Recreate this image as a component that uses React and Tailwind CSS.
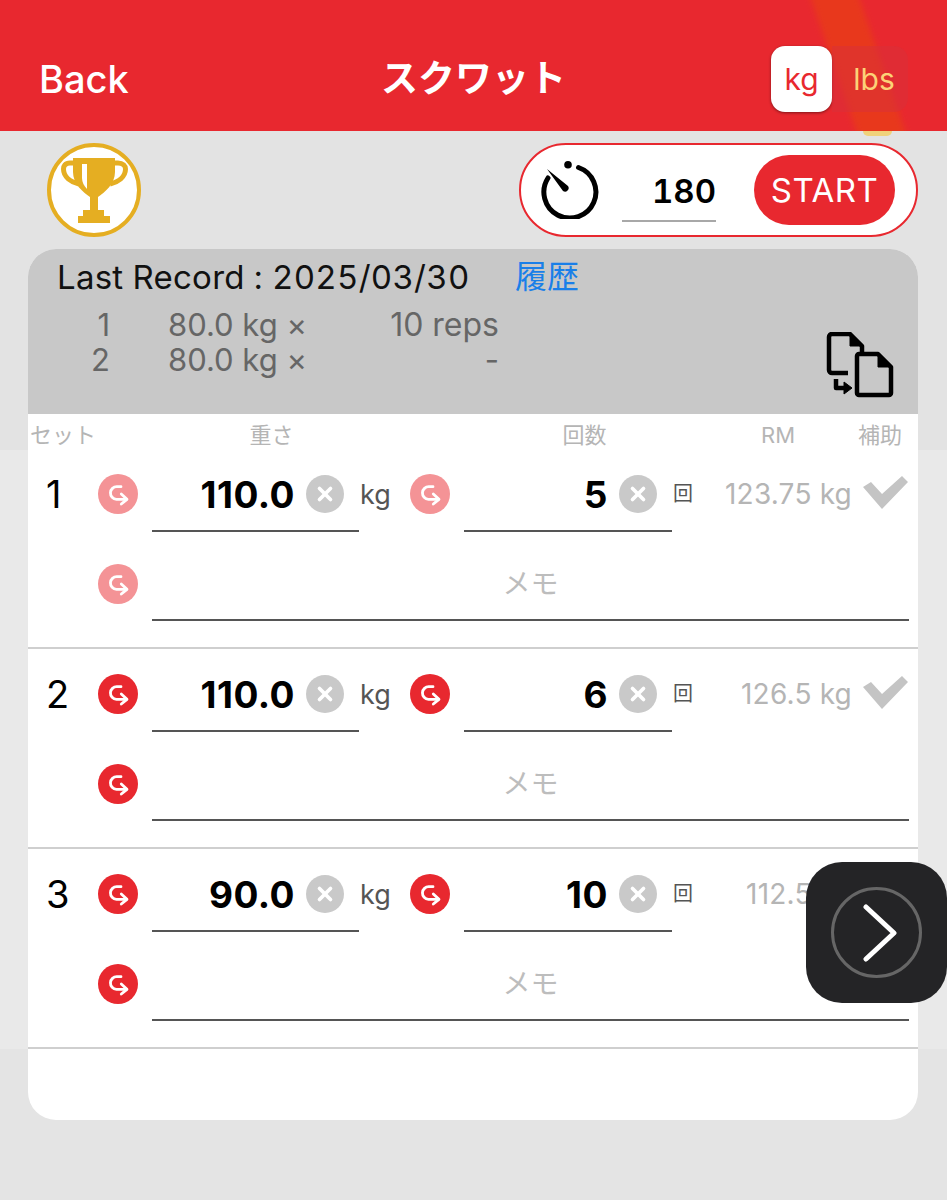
import { X } from 'lucide-react';

function ArrowBadge({ faded }) {
  return (
    <div className={`w-10 h-10 rounded-full flex items-center justify-center shrink-0 ${faded ? 'bg-[#f49396]' : 'bg-[#e8282f]'}`}>
      <svg width="24" height="24" viewBox="0 0 24 24" fill="none" stroke="white" strokeWidth="2.8" strokeLinecap="round" strokeLinejoin="round">
        <path d="M15 4.700h-4a5 5 0 0 0-.5 12.600H20" />
        <path d="M15.300 12l5.700 5.300-5.700 4.700" />
      </svg>
    </div>
  );
}

function ClearButton() {
  return (
    <div className="w-[38px] h-[38px] rounded-full bg-[#c9c9c9] flex items-center justify-center shrink-0">
      <X size={22} color="white" strokeWidth={4} />
    </div>
  );
}

function SetRow({ num, weight, reps, rm, faded }) {
  return (
    <div className="h-[200px] border-b-2 border-[#cfcfcf] pt-[25px] flex flex-col">
      <div className="flex items-center h-[40px]">
        <div className="w-[70px] pl-[18px] text-[38px] text-black leading-none">{num}</div>
        <ArrowBadge faded={faded} />
        <div className="w-[14px]" />
        <div className="relative w-[207px] flex items-center justify-end pr-[15px]">
          <span className="font-bold text-[37px] text-black leading-none pr-[11px] tracking-[0.5px]">{weight}</span>
          <ClearButton />
          <div className="absolute left-0 right-0 top-[55px] h-[2px] bg-[#555555]" />
        </div>
        <div className="w-[51px] text-[27px] text-[#555555] leading-none pl-[1px]">kg</div>
        <ArrowBadge faded={faded} />
        <div className="w-[14px]" />
        <div className="relative w-[208px] flex items-center justify-end pr-[15px]">
          <span className="font-bold text-[37px] text-black leading-none pr-[11px] tracking-[0.5px]">{reps}</span>
          <ClearButton />
          <div className="absolute left-0 right-0 top-[55px] h-[2px] bg-[#555555]" />
        </div>
        <div className="text-[20px] text-[#555555] leading-none w-[20px] ml-[1px]">回</div>
        <div className="w-[159px] text-right text-[28px] text-[#b5b5b5] leading-none whitespace-nowrap tracking-[0.2px]">{rm}</div>
        <svg width="47" height="34" viewBox="0 0 47 34" fill="#c4c4c4" className="ml-[10px] shrink-0 -translate-y-[1px]">
          <path d="M1 11L9 6L20 18L40 0L46 6L20 33Z" />
        </svg>
      </div>
      <div className="flex items-center h-[40px] mt-[50px] pl-[70px]">
        <ArrowBadge faded={faded} />
        <div className="w-[14px]" />
        <div className="relative w-[757px] text-center text-[28px] text-[#bdbdbd] leading-none">
          メモ
          <div className="absolute left-0 right-0 top-[49px] h-[2px] bg-[#555555]" />
        </div>
      </div>
    </div>
  );
}

export default function App() {
  return (
    <div
      className="relative w-[947px] h-[1200px] overflow-hidden bg-[linear-gradient(#e3e3e3_0,#e3e3e3_450px,#e9e9e9_450px,#e9e9e9_1049px,#e4e4e4_1049px)]"
      style={{ fontFamily: 'Inter, "Noto Sans CJK JP", sans-serif' }}
    >
      {/* Header */}
      <div className="relative h-[131px] bg-[#e8282f] overflow-hidden">
        <div className="absolute left-[835px] top-[-40px] w-[46px] h-[210px] bg-[#e8381c] blur-[3px] -rotate-[19deg]" />
        <div className="relative h-full flex items-center pl-[39px] pr-[39px] pt-[27px]">
          <div className="text-white text-[38px] font-medium leading-none w-[343px]">Back</div>
          <div className="text-white text-[37px] font-semibold leading-none w-[389px] -mt-[2px] -ml-[1px] pr-[0px]">スクワット</div>
          <div className="w-[61px] h-[66px] ml-[1px] rounded-[14px] bg-white shadow-[0_1px_3px_rgba(0,0,0,0.45)] flex items-center justify-center text-[#e8282f] text-[30px] leading-none">kg</div>
          <div className="w-[76px] h-[66px] pl-[8px] rounded-r-[14px] bg-[#d8303a]/50 flex items-center justify-center text-[#fcd277] text-[30px] leading-none">lbs</div>
        </div>
      </div>

      {/* Trophy and timer */}
      <div className="flex items-center h-[118px] pl-[47px] pr-[29px] justify-between">
        <div className="w-[94px] h-[94px] rounded-full bg-white border-[4px] border-[#e5ae22] flex items-center justify-center">
          <svg width="67" height="65" viewBox="0 0 67 65" className="mt-[1px]">
            <path fill="#e5ae22" d="M12 0H54V14C54 26 44 34 37 39V52H43V58H49V65H17V58H22V52H29V39C22 34 12 26 12 14Z" />
            <path fill="none" stroke="#e5ae22" strokeWidth="5" d="M14 5H9C4 5 2.500 8 2.500 11C2.500 19 10 24 18 26" />
            <path fill="none" stroke="#e5ae22" strokeWidth="5" d="M52 5H57C62 5 64.500 8 64.500 11C64.500 19 57 24 49 26" />
            <path fill="white" d="M21 6H26V31C23 28 21 24 21 20Z" />
          </svg>
        </div>
        <div className="w-[399px] h-[94px] rounded-full bg-white border-[2px] border-[#e8282f] flex items-center pl-[18px] pr-[21px]">
          <svg width="60" height="58" viewBox="0 0 60 58" fill="none" className="shrink-0">
            <path d="M39.500 6.500A26 26 0 1 1 9 17" stroke="black" strokeWidth="5" strokeLinecap="round" />
            <circle cx="29" cy="3.800" r="3.800" fill="black" />
            <path d="M8 8l21 17a3.600 3.600 0 0 1-5 5z" fill="black" />
          </svg>
          <div className="relative w-[94px] ml-[23px] mt-[3px] text-right font-semibold text-[33px] leading-none text-black tabular-nums">
            180
            <div className="absolute left-0 right-0 top-[45px] h-[2px] bg-[#a8a8a8]" />
          </div>
          <div className="ml-[38px] w-[141px] h-[70px] rounded-[35px] bg-[#e8282f] flex items-center justify-center text-white text-[33px] leading-none tracking-[0.5px]">START</div>
        </div>
      </div>

      {/* Main card */}
      <div className="ml-[28px] w-[890px] h-[871px] rounded-[28px] bg-white overflow-hidden">
        <div className="relative h-[165px] bg-[#c8c8c8] pt-[11px]">
          <div className="flex items-center h-[34px] pl-[29px] text-[33px] leading-none text-[#111111]">
            <span className="w-[458px] whitespace-nowrap tabular-nums tracking-[0.25px]">Last Record : 2025/03/30</span>
            <span className="text-[#1a7fe8] text-[32px]">履歴</span>
          </div>
          <div className="mt-[13px] text-[31px] leading-[35px] text-[#666666]">
            <div className="flex">
              <span className="w-[82px] text-right">1</span>
              <span className="ml-[58px] w-[140px] whitespace-nowrap">80.0 kg ×</span>
              <span className="w-[191px] text-right whitespace-nowrap text-[32px]">10 reps</span>
            </div>
            <div className="flex">
              <span className="w-[82px] text-right">2</span>
              <span className="ml-[58px] w-[140px] whitespace-nowrap">80.0 kg ×</span>
              <span className="w-[191px] text-right">-</span>
            </div>
          </div>
          <svg className="absolute left-[798px] top-[83px]" width="68" height="66" viewBox="0 0 68 66" fill="none" stroke="black" strokeWidth="4.500" strokeLinejoin="round">
            <path d="M22 41H6a3 3 0 0 1-3-3V5a3 3 0 0 1 3-3h18l12 12v7" />
            <path d="M24 2v12h12z" fill="black" strokeWidth="1" />
            <path d="M33 22h19l13 13v26a2 2 0 0 1-2 2H33a2 2 0 0 1-2-2V24a2 2 0 0 1 2-2z" />
            <path d="M52 22v13h13z" fill="black" strokeWidth="1" />
            <path d="M10 47v9h10" />
            <path d="M18 50l8 6-8 6z" fill="black" strokeWidth="1" />
          </svg>
        </div>
        <div className="flex h-[35px] pt-[6px] items-center text-[22px] text-[#b5b5b5] leading-none">
          <span className="w-[66px] pl-[2px] whitespace-nowrap">セット</span>
          <span className="w-[355px] text-center">重さ</span>
          <span className="w-[205px] text-center pl-[66px]">回数</span>
          <span className="w-[141px] text-right">RM</span>
          <span className="w-[107px] text-right">補助</span>
        </div>
        <SetRow num="1" weight="110.0" reps="5" rm="123.75 kg" faded />
        <SetRow num="2" weight="110.0" reps="6" rm="126.5 kg" />
        <SetRow num="3" weight="90.0" reps="10" rm="112.5 kg" />
      </div>

      {/* Floating next button */}
      <div className="absolute left-[806px] top-[862px] w-[141px] h-[141px] rounded-[36px] bg-[#242426] flex items-center justify-center">
        <div className="w-[91px] h-[91px] rounded-full border-[3px] border-[#666666] flex items-center justify-center">
          <svg width="34" height="58" viewBox="0 0 34 58" fill="none" stroke="white" strokeWidth="5" strokeLinecap="round" strokeLinejoin="round" className="ml-[6px]">
            <path d="M3 3l28 26L3 55" />
          </svg>
        </div>
      </div>

      {/* Orange streak end over the lbs toggle */}
      <div className="absolute left-[863px] top-[131px] w-[29px] h-[5px] rounded-b-full bg-[#f0d27a]" />
    </div>
  );
}
